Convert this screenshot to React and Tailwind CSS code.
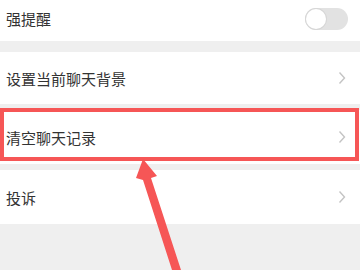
import React from "react"

const font = { fontFamily: '"Noto Sans CJK SC", "Noto Sans", sans-serif' }

function Chevron() {
  return (
    <svg width="8" height="14" viewBox="0 0 8 14" className="shrink-0">
      <path d="M1.5 1.5 L6.5 7 L1.5 12.5" fill="none" stroke="#c4c4c4" strokeWidth="1.4" />
    </svg>
  )
}

function Row({ label, height, right }) {
  return (
    <div className={`flex items-center justify-between bg-white pl-[6px] pr-[14px] ${height}`}>
      <span className="text-[15px] leading-none text-[#333333]">{label}</span>
      {right}
    </div>
  )
}

export default function App() {
  return (
    <div className="relative w-[360px] h-[270px] overflow-hidden bg-[#efefef]" style={font}>
      {/* switch row */}
      <div className="flex items-center justify-between bg-white pl-[6px] pr-[12px] h-[41px] pb-[4px]">
        <span className="text-[15px] leading-none text-[#333333]">强提醒</span>
        <div className="w-[43px] h-[22px] rounded-full bg-[#e2e2e2] flex items-center px-[1px]">
          <div className="w-[20px] h-[20px] rounded-full bg-white shadow-[0_0_0_1px_#d6d6d6]" />
        </div>
      </div>

      <div className="h-[11px]" />
      <Row label="设置当前聊天背景" height="h-[52px]" right={<Chevron />} />

      <div className="h-[6px]" />
      <Row label="清空聊天记录" height="h-[54px]" right={<Chevron />} />

      <div className="h-[6px]" />
      <Row label="投诉" height="h-[54px]" right={<Chevron />} />

      {/* annotation box */}
      <div className="absolute left-0 top-[108px] w-[359px] h-[53px] border-[4px] border-[#f65656]" />

      {/* annotation arrow */}
      <svg className="absolute left-0 top-0" width="360" height="270" viewBox="0 0 360 270">
        <polygon
          points="143,159 157,176 151,178 181,270 172,270 143,180 136,178"
          fill="#f65656"
        />
      </svg>
    </div>
  )
}
